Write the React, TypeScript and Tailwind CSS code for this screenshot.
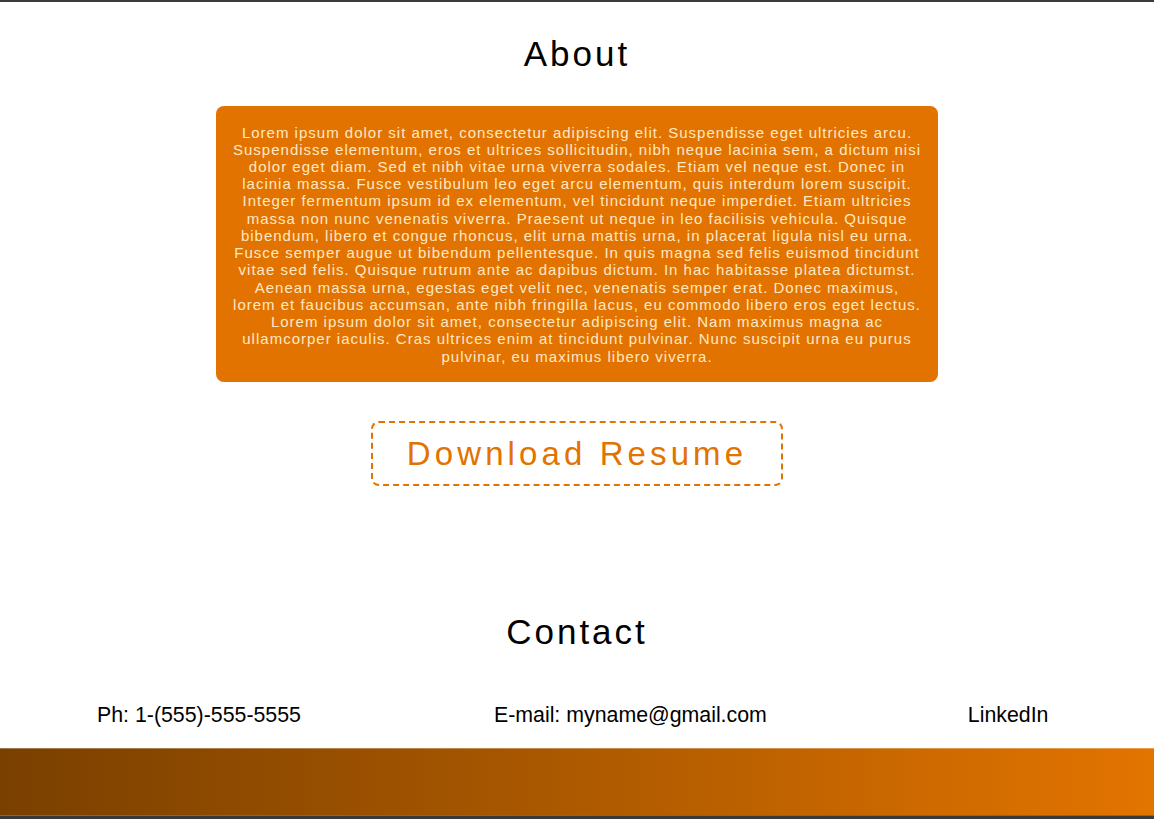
const LOREM =
  "Lorem ipsum dolor sit amet, consectetur adipiscing elit. Suspendisse eget ultricies arcu. Suspendisse elementum, eros et ultrices sollicitudin, nibh neque lacinia sem, a dictum nisi dolor eget diam. Sed et nibh vitae urna viverra sodales. Etiam vel neque est. Donec in lacinia massa. Fusce vestibulum leo eget arcu elementum, quis interdum lorem suscipit. Integer fermentum ipsum id ex elementum, vel tincidunt neque imperdiet. Etiam ultricies massa non nunc venenatis viverra. Praesent ut neque in leo facilisis vehicula. Quisque bibendum, libero et congue rhoncus, elit urna mattis urna, in placerat ligula nisl eu urna. Fusce semper augue ut bibendum pellentesque. In quis magna sed felis euismod tincidunt vitae sed felis. Quisque rutrum ante ac dapibus dictum. In hac habitasse platea dictumst. Aenean massa urna, egestas eget velit nec, venenatis semper erat. Donec maximus, lorem et faucibus accumsan, ante nibh fringilla lacus, eu commodo libero eros eget lectus. Lorem ipsum dolor sit amet, consectetur adipiscing elit. Nam maximus magna ac ullamcorper iaculis. Cras ultrices enim at tincidunt pulvinar. Nunc suscipit urna eu purus pulvinar, eu maximus libero viverra.";

export default function App() {
  return (
    <div
      className="min-h-screen bg-white border-t-2 border-[#3a3a3a] text-black"
      style={{ fontFamily: '"Liberation Sans", Arial, sans-serif' }}
    >
      <section className="flex flex-col items-center">
        <h2 className="mt-[32px] text-[35px] leading-[40px] tracking-[3px]">About</h2>
        <div className="mt-[32px] w-[722px] rounded-lg bg-[#e27300] px-4 py-[17.5px] text-center text-[15px] leading-[17.23px] tracking-[1px] text-[#ffe8c4]">
          {LOREM}
        </div>
        <a
          href="#"
          className="mt-[39px] rounded-lg border-2 border-dashed border-[#e27300] px-[34px] py-[11.5px] text-[33px] leading-[38px] tracking-[4.1px] text-[#e27300]"
        >
          Download Resume
        </a>
      </section>

      <section className="flex flex-col items-center">
        <h2 className="mt-[126px] text-[35px] leading-[40px] tracking-[3px]">Contact</h2>
      </section>
      <div className="mt-[51px] flex pl-[97px] text-[21.33px] leading-[24.5px]">
        <span>Ph: 1-(555)-555-5555</span>
        <span className="ml-[193px]">E-mail: myname@gmail.com</span>
        <a href="#" className="ml-[201px]">LinkedIn</a>
      </div>

      <footer className="mt-[20px] h-[67px] border-t border-white/30 bg-gradient-to-r from-[#7a4000] to-[#e37400]" />
      <div className="h-[6px] border-t border-[#6b6b6b] bg-[#3a3a3a]" />
    </div>
  );
}
